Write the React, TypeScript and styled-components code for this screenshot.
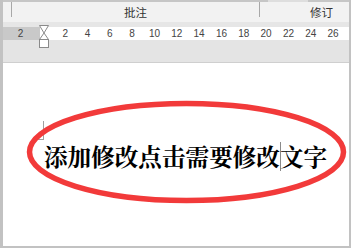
import React from "react";
import styled, { createGlobalStyle } from "styled-components";

const Global = createGlobalStyle`
  html, body { margin: 0; padding: 0; background: #ffffff; }
  body { font-family: "Liberation Sans", "Noto Sans CJK SC", sans-serif; }
`;

const Window = styled.div`
  width: 351px;
  height: 248px;
  box-sizing: border-box;
  display: flex;
  flex-direction: column;
  border-left: 3px solid #c2c2c2;
  border-right: 2px solid #c2c2c2;
  border-bottom: 2px solid #c2c2c2;
  overflow: hidden;
`;

const TopBar = styled.div`
  height: 2px;
  flex: none;
  display: flex;
  background: #c6c6c6;
`;

const TopBarLight = styled.div`
  margin-left: 265px;
  width: 40px;
  background: #dedede;
`;

const Header = styled.div`
  height: 20px;
  flex: none;
  display: flex;
  background: #f2f2f2;
  font-family: "Noto Sans CJK SC", sans-serif;
  font-size: 11.5px;
  color: #333333;
`;

const HeaderCell = styled.div<{ $w: number; $align?: string; $pad?: number }>`
  width: ${(p) => p.$w}px;
  flex: none;
  display: flex;
  align-items: center;
  justify-content: ${(p) => p.$align || "center"};
  padding-right: ${(p) => p.$pad || 0}px;
  box-sizing: border-box;
`;

const Divider = styled.div`
  width: 1px;
  height: 15px;
  flex: none;
  align-self: flex-start;
  background: #a8a8a8;
`;

const Band = styled.div`
  height: 5px;
  flex: none;
  background: #e6e6e6;
`;

const RulerWrap = styled.div`
  position: relative;
  flex: none;
  display: flex;
  flex-direction: column;
`;

const Ruler = styled.div`
  height: 13px;
  display: flex;
  background: #ffffff;
  font-family: "Liberation Sans", Arial, sans-serif;
  font-size: 10px;
  color: #444444;
  line-height: 13px;
`;

const RulerGray = styled.div`
  width: 37px;
  flex: none;
  background: #c9c9c9;
  text-align: center;
  box-sizing: border-box;
  padding-right: 2px;
`;

const RulerTicks = styled.div`
  display: flex;
  padding-left: 14px;
`;

const Tick = styled.div`
  width: 22.33px;
  flex: none;
  text-align: center;
`;

const RulerBelow = styled.div`
  height: 22px;
  background: #e4e4e4;
  border-bottom: 1px solid #cfcfcf;
`;

const Marker = styled.svg`
  position: absolute;
  left: 35px;
  top: -2px;
`;

const Page = styled.div`
  position: relative;
  flex: 1;
  background: #ffffff;
  padding: 78px 0 0 41px;
  box-sizing: border-box;
`;

const TextLine = styled.div`
  position: relative;
  font-family: "Noto Serif CJK SC", "Noto Serif SC", "Noto Sans CJK SC", serif;
  font-weight: 700;
  font-size: 23.6px;
  line-height: 30px;
  color: #000000;
  white-space: nowrap;
  display: flex;
  align-items: center;
`;

const Caret = styled.span`
  display: inline-block;
  width: 1px;
  height: 29px;
  margin-right: -1px;
  background: #8a8a8a;
`;

const CornerMark = styled.div`
  position: absolute;
  left: 35px;
  top: 58px;
  width: 5px;
  height: 18px;
  border-right: 1px solid #a0a0a0;
  border-bottom: 1px solid #a0a0a0;
`;

const Ellipse = styled.svg`
  position: absolute;
  left: 0;
  top: 0;
  pointer-events: none;
`;

const ticks = ["2", "4", "6", "8", "10", "12", "14", "16", "18", "20", "22", "24", "26"];

export default function App() {
  return (
    <>
      <Global />
      <Window>
        <TopBar>
          <TopBarLight />
        </TopBar>
        <Header>
          <HeaderCell $w={8} />
          <Divider />
          <HeaderCell $w={247}>批注</HeaderCell>
          <Divider />
          <HeaderCell $w={89} $align="flex-end" $pad={16}>修订</HeaderCell>
        </Header>
        <Band />
        <RulerWrap>
          <Ruler>
            <RulerGray>2</RulerGray>
            <RulerTicks>
              {ticks.map((t) => (
                <Tick key={t}>{t}</Tick>
              ))}
            </RulerTicks>
          </Ruler>
          <RulerBelow />
          <Marker width="12" height="25" viewBox="0 0 12 25">
            <path d="M1.5 0.5 H10.5 L6 8 Z" fill="#ffffff" stroke="#8a8a8a" strokeWidth="1" />
            <path d="M6 8 L10.5 14.5 H1.5 Z" fill="#ffffff" stroke="#8a8a8a" strokeWidth="1" />
            <rect x="1.5" y="14.5" width="9" height="8" fill="#ffffff" stroke="#8a8a8a" strokeWidth="1" />
          </Marker>
        </RulerWrap>
        <Page>
          <CornerMark />
          <TextLine>
            添加修改点击需要修改<Caret />文字
          </TextLine>
          <Ellipse width="346" height="183" viewBox="0 0 346 183">
            <ellipse cx="183.5" cy="89" rx="157" ry="48.5" fill="none" stroke="#f23a3a" strokeWidth="5.5" />
          </Ellipse>
        </Page>
      </Window>
    </>
  );
}
